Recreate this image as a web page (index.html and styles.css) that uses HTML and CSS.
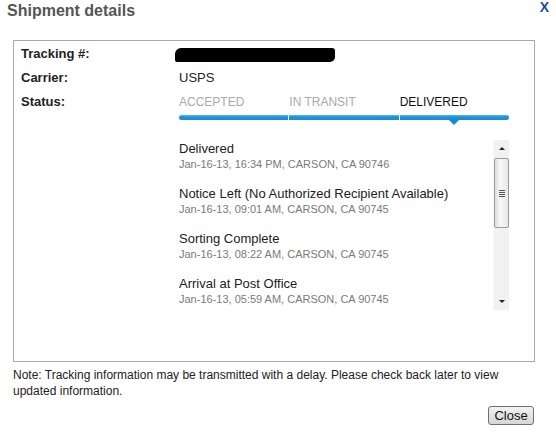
FILE: index.html
```html
<!DOCTYPE html>
<html>

<head>
    <title>Shipment details</title>
    <meta name='viewport' content='width=device-width'>
    <link rel="stylesheet" href="styles.css">
</head>

<body>
    <div class='dialog'>
        <div class='dialog-head'>
            <b class='dialog-title'>Shipment details</b>
            <span class='dialog-x'>X</span>
        </div>

        <div class='details'>
            <div class='row'>
                <span class='label'>Tracking #:</span>
                <span class='value'><span class='redacted'></span></span>
            </div>
            <div class='row'>
                <span class='label'>Carrier:</span>
                <span class='value'>USPS</span>
            </div>
            <div class='row'>
                <span class='label'>Status:</span>
                <div class='value'>
                    <div class='steps'>
                        <div class='step'>
                            <span class='step-name'>ACCEPTED</span>
                            <div class='step-bar first'></div>
                        </div>
                        <div class='step'>
                            <span class='step-name'>IN TRANSIT</span>
                            <div class='step-bar'></div>
                        </div>
                        <div class='step current'>
                            <span class='step-name'>DELIVERED</span>
                            <div class='step-bar last'></div>
                        </div>
                    </div>

                    <div class='history'>
                        <ul class='events'>
                            <li>
                                <div class='event-name'>Delivered</div>
                                <div class='event-when'>Jan-16-13, 16:34 PM, CARSON, CA 90746</div>
                            </li>
                            <li>
                                <div class='event-name'>Notice Left (No Authorized Recipient Available)</div>
                                <div class='event-when'>Jan-16-13, 09:01 AM, CARSON, CA 90745</div>
                            </li>
                            <li>
                                <div class='event-name'>Sorting Complete</div>
                                <div class='event-when'>Jan-16-13, 08:22 AM, CARSON, CA 90745</div>
                            </li>
                            <li>
                                <div class='event-name'>Arrival at Post Office</div>
                                <div class='event-when'>Jan-16-13, 05:59 AM, CARSON, CA 90745</div>
                            </li>
                        </ul>
                        <div class='scrollbar'>
                            <div class='sb-btn'><span class='sb-up'></span></div>
                            <div class='sb-track'>
                                <div class='sb-thumb'><span class='grip'></span></div>
                            </div>
                            <div class='sb-btn'><span class='sb-down'></span></div>
                        </div>
                    </div>
                </div>
            </div>
        </div>

        <p class='note'>Note: Tracking information may be transmitted with a delay. Please check back later to view updated information.</p>

        <div class='actions'>
            <button type='button' class='btn-close'>Close</button>
        </div>
    </div>
</body>

</html>
```

FILE: styles.css
```css
body {
    margin: 0;
    font-family: "Liberation Sans", Arial, sans-serif;
    color: #222;
    background: #fff;
}

.dialog {
    width: 556px;
}

.dialog-head {
    display: flex;
    justify-content: space-between;
    height: 40px;
}

.dialog-title {
    font-size: 16px;
    line-height: 20px;
    color: #555;
    padding: 1px 0 0 7px;
}

.dialog-x {
    font-size: 14px;
    font-weight: bold;
    line-height: 14px;
    color: #1c4c9c;
    padding: 0 7px 0 0;
}

.details {
    margin-left: 13px;
    width: 520px;
    height: 319px;
    border: 1px solid #aaa;
    padding-top: 1px;
}

.row {
    display: flex;
    font-size: 13px;
    line-height: 24px;
}

.label {
    width: 165px;
    padding-left: 7px;
    box-sizing: border-box;
    font-weight: bold;
}

.value {
    width: 330px;
}

.redacted {
    display: inline-block;
    vertical-align: top;
    margin: 6px 0 0 -4px;
    width: 160px;
    height: 14px;
    background: #000;
    border-radius: 6px 3px 5px 2px;
}

.steps {
    display: grid;
    grid-template-columns: 1fr 1fr 1fr;
    column-gap: 1px;
}

.step {
    position: relative;
}

.step-name {
    display: block;
    font-size: 12px;
    line-height: 24px;
    color: #aaa;
}

.step.current .step-name {
    color: #111;
}

.step-bar {
    height: 5px;
    margin-top: 1px;
    background: linear-gradient(#5ab6ee, #1e93de 40%, #1a8ad6);
}

.step-bar.first {
    border-radius: 3px 0 0 3px;
}

.step-bar.last {
    border-radius: 0 3px 3px 0;
}

.step.current::after {
    content: '';
    position: absolute;
    left: 50%;
    bottom: -5px;
    margin-left: -6px;
    border-left: 6px solid transparent;
    border-right: 6px solid transparent;
    border-top: 6px solid #1a8ad6;
}

.history {
    display: flex;
    height: 170px;
    margin-top: 20px;
}

.events {
    flex: 1;
    list-style: none;
    margin: 0;
    padding: 1px 0 0;
    overflow: hidden;
}

.events li {
    margin-bottom: 15px;
}

.event-name {
    font-size: 13px;
    line-height: 16px;
    color: #201c24;
}

.event-when {
    font-size: 11px;
    line-height: 14px;
    color: #7a7a7a;
}

.scrollbar {
    width: 16px;
    display: flex;
    flex-direction: column;
    background: #f1f1f1;
    border-left: 1px solid #f7f7f7;
    box-sizing: border-box;
}

.sb-btn {
    height: 17px;
    display: flex;
    align-items: center;
    justify-content: center;
}

.sb-up {
    border-left: 3px solid transparent;
    border-right: 3px solid transparent;
    border-bottom: 3px solid #222;
}

.sb-down {
    border-left: 3px solid transparent;
    border-right: 3px solid transparent;
    border-top: 3px solid #222;
}

.sb-track {
    flex: 1;
}

.sb-thumb {
    height: 70px;
    margin-top: 1px;
    border: 1px solid #9b9b9b;
    border-radius: 2px;
    background: linear-gradient(to right, #dcdcdc, #f8f8f8 40%, #e6e6e6);
    display: flex;
    align-items: center;
    justify-content: center;
    box-sizing: border-box;
}

.grip {
    width: 6px;
    height: 7px;
    background: repeating-linear-gradient(#555 0 1px, transparent 1px 2px);
}

.note {
    margin: 5px 0 0 13px;
    width: 522px;
    font-size: 12px;
    line-height: 16px;
    color: #222;
}

.actions {
    display: flex;
    justify-content: flex-end;
    width: 534px;
    margin-top: 7px;
}

.btn-close {
    font-family: "Liberation Sans", Arial, sans-serif;
    font-size: 13px;
    color: #111;
    width: 46px;
    height: 19px;
    padding: 0;
    border: 1px solid #707070;
    border-radius: 3px;
    background: linear-gradient(#f3f3f3, #e3e3e3 50%, #d6d6d6);
}
```
